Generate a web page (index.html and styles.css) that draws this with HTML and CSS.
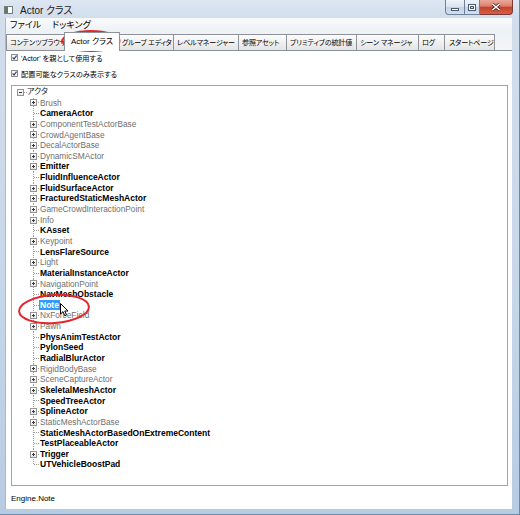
FILE: index.html
```html
<!DOCTYPE html>
<html lang="ja">
<head>
<meta charset="utf-8">
<title>Actor クラス</title>
<link rel="stylesheet" href="styles.css">
</head>
<body>
<div class="window">
  <div class="titlebar">
    <svg class="app-icon" width="9" height="8" viewBox="0 0 9 8"><rect x="0.5" y="0.5" width="8" height="7" fill="#fff" stroke="#6f7f7a"/><rect x="1" y="1" width="3" height="6" fill="#5f7a6c"/></svg>
    <span class="title">Actor クラス</span>
    <div class="caption">
      <div class="cbtn cbtn-min"><svg width="8" height="3" viewBox="0 0 8 3"><rect x="0.5" y="0.5" width="7" height="2" fill="#fff" stroke="#4b5a70"/></svg></div>
      <div class="cbtn cbtn-max"><svg width="8" height="7" viewBox="0 0 8 7"><rect x="0.5" y="0.5" width="7" height="6" fill="none" stroke="#4b5a70"/><rect x="1.5" y="1.5" width="5" height="4" fill="none" stroke="#fff"/><rect x="2.5" y="2.5" width="3" height="2" fill="none" stroke="#4b5a70"/></svg></div>
      <div class="cbtn cbtn-close"><svg width="10" height="8" viewBox="0 0 10 8"><path d="M1.5 1 L8.5 7 M8.5 1 L1.5 7" stroke="#5a1c14" stroke-width="3"/><path d="M1.5 1 L8.5 7 M8.5 1 L1.5 7" stroke="#fff" stroke-width="1.6"/></svg></div>
    </div>
  </div>
  <div class="client">
    <div class="menubar"><span class="menu-item">ファイル</span><span class="menu-item">ドッキング</span></div>
    <div class="tabs">
      <div class="tab tab-w1">コンテンツブラウザ</div>
      <div class="tab tab-w2 tab-active">Actor クラス</div>
      <div class="tab tab-w3">グループ エディタ</div>
      <div class="tab tab-w4">レベルマネージャー</div>
      <div class="tab tab-w5">参照アセット</div>
      <div class="tab tab-w6">プリミティブの統計値</div>
      <div class="tab tab-w7">シーン マネージャ</div>
      <div class="tab tab-w8">ログ</div>
      <div class="tab tab-w9">スタートページ</div>
    </div>
    <div class="panel">
      <div class="check"><svg class="cb" width="7" height="7" viewBox="0 0 7 7"><rect x="0.5" y="0.5" width="6" height="6" fill="#f3f4f6" stroke="#8e8f8f"/><path d="M1.6 3.4 L3 5 L5.6 1.6" fill="none" stroke="#36497a" stroke-width="1.2"/></svg><span>'Actor' を親として使用する</span></div>
      <div class="check check-2"><svg class="cb" width="7" height="7" viewBox="0 0 7 7"><rect x="0.5" y="0.5" width="6" height="6" fill="#f3f4f6" stroke="#8e8f8f"/><path d="M1.6 3.4 L3 5 L5.6 1.6" fill="none" stroke="#36497a" stroke-width="1.2"/></svg><span>配置可能なクラスのみ表示する</span></div>
      <div class="tree">
        <div class="row root"><span class="conn conn-root"><span class="box box-minus"></span></span><span class="label label-root">アクタ</span></div>
        <div class="row"><span class="conn"><span class="box"></span></span><span class="label gray">Brush</span></div>
        <div class="row"><span class="conn leaf"></span><span class="label bold">CameraActor</span></div>
        <div class="row"><span class="conn"><span class="box"></span></span><span class="label gray">ComponentTestActorBase</span></div>
        <div class="row"><span class="conn"><span class="box"></span></span><span class="label gray">CrowdAgentBase</span></div>
        <div class="row"><span class="conn"><span class="box"></span></span><span class="label gray">DecalActorBase</span></div>
        <div class="row"><span class="conn"><span class="box"></span></span><span class="label gray">DynamicSMActor</span></div>
        <div class="row"><span class="conn"><span class="box"></span></span><span class="label bold">Emitter</span></div>
        <div class="row"><span class="conn leaf"></span><span class="label bold">FluidInfluenceActor</span></div>
        <div class="row"><span class="conn"><span class="box"></span></span><span class="label bold">FluidSurfaceActor</span></div>
        <div class="row"><span class="conn"><span class="box"></span></span><span class="label bold">FracturedStaticMeshActor</span></div>
        <div class="row"><span class="conn"><span class="box"></span></span><span class="label gray">GameCrowdInteractionPoint</span></div>
        <div class="row"><span class="conn"><span class="box"></span></span><span class="label gray">Info</span></div>
        <div class="row"><span class="conn leaf"></span><span class="label bold">KAsset</span></div>
        <div class="row"><span class="conn"><span class="box"></span></span><span class="label gray">Keypoint</span></div>
        <div class="row"><span class="conn leaf"></span><span class="label bold">LensFlareSource</span></div>
        <div class="row"><span class="conn"><span class="box"></span></span><span class="label gray">Light</span></div>
        <div class="row"><span class="conn leaf"></span><span class="label bold">MaterialInstanceActor</span></div>
        <div class="row"><span class="conn"><span class="box"></span></span><span class="label gray">NavigationPoint</span></div>
        <div class="row"><span class="conn leaf"></span><span class="label bold">NavMeshObstacle</span></div>
        <div class="row"><span class="conn leaf"></span><span class="label bold selected">Note</span></div>
        <div class="row"><span class="conn"><span class="box"></span></span><span class="label gray">NxForceField</span></div>
        <div class="row"><span class="conn"><span class="box"></span></span><span class="label gray">Pawn</span></div>
        <div class="row"><span class="conn leaf"></span><span class="label bold">PhysAnimTestActor</span></div>
        <div class="row"><span class="conn leaf"></span><span class="label bold">PylonSeed</span></div>
        <div class="row"><span class="conn leaf"></span><span class="label bold">RadialBlurActor</span></div>
        <div class="row"><span class="conn"><span class="box"></span></span><span class="label gray">RigidBodyBase</span></div>
        <div class="row"><span class="conn"><span class="box"></span></span><span class="label gray">SceneCaptureActor</span></div>
        <div class="row"><span class="conn"><span class="box"></span></span><span class="label bold">SkeletalMeshActor</span></div>
        <div class="row"><span class="conn leaf"></span><span class="label bold">SpeedTreeActor</span></div>
        <div class="row"><span class="conn"><span class="box"></span></span><span class="label bold">SplineActor</span></div>
        <div class="row"><span class="conn"><span class="box"></span></span><span class="label gray">StaticMeshActorBase</span></div>
        <div class="row"><span class="conn leaf"></span><span class="label bold">StaticMeshActorBasedOnExtremeContent</span></div>
        <div class="row"><span class="conn leaf"></span><span class="label bold">TestPlaceableActor</span></div>
        <div class="row"><span class="conn"><span class="box"></span></span><span class="label bold">Trigger</span></div>
        <div class="row"><span class="conn leaf last"></span><span class="label bold">UTVehicleBoostPad</span></div>
      </div>
      <div class="status">Engine.Note</div>
    </div>
  </div>
  <svg class="annot" width="520" height="515" viewBox="0 0 520 515">
    <ellipse cx="91" cy="41" rx="28.5" ry="10" fill="none" stroke="#e3262b" stroke-width="2"/>
    <ellipse cx="54" cy="309" rx="35" ry="14" transform="rotate(-4 54 309)" fill="none" stroke="#e3262b" stroke-width="2"/>
  </svg>
  <svg class="cursor" width="9" height="14" viewBox="0 0 9 14"><path d="M0.5 0.5 L0.5 11 L3 8.6 L4.8 12.8 L6.5 12 L4.8 8 L8 8 Z" fill="#fff" stroke="#000" stroke-width="1" stroke-linejoin="round"/></svg>
</div>
</body>
</html>
```
FILE: styles.css
```css
* { box-sizing: border-box; margin: 0; padding: 0; }
html, body { width: 520px; height: 515px; overflow: hidden; }
body {
  font-family: "Liberation Sans", "Noto Sans CJK JP", sans-serif;
  background: #c6d5e7;
  color: #000;
}
.window {
  position: relative;
  width: 520px;
  height: 515px;
  display: flex;
  flex-direction: column;
  background: linear-gradient(to bottom, #dde7f3 0, #d2deec 18px, #c6d6e9 60%, #b7cbe3 100%);
  border-right: 1px solid #7088a8;
  border-bottom: 1px solid #7088a8;
}
.titlebar {
  height: 18px;
  display: flex;
  align-items: center;
  padding-left: 4px;
}
.app-icon { margin-top: 2px; flex: none; }
.title {
  margin-left: 7px;
  font-size: 10px;
  color: #1b1b1b;
  font-feature-settings: "palt";
  margin-top: 1px;
}
.caption {
  margin-left: auto;
  margin-right: 6px;
  align-self: flex-start;
  display: flex;
}
.cbtn {
  height: 15px;
  display: flex;
  align-items: center;
  justify-content: center;
  border: 1px solid #6f819b;
  border-top: 0;
  background: linear-gradient(to bottom, #eef3f9 0, #d9e3ef 50%, #c4d2e4 51%, #d3dfee 100%);
}
.cbtn-min { width: 19px; border-radius: 0 0 0 4px; border-right: 0; }
.cbtn-min svg { margin-top: 5px; }
.cbtn-max { width: 16px; }
.cbtn-close {
  width: 33px;
  border-left: 0;
  border-color: #7a3a33;
  border-radius: 0 0 4px 0;
  background: linear-gradient(to bottom, #e9a99b 0, #dc7f6c 45%, #c6402b 50%, #d2604a 100%);
}
.client {
  flex: 1;
  margin: 0 7px 5px 5px;
  display: flex;
  flex-direction: column;
  background: #fff;
  border-left: 1px solid #aab8c9;
}
.menubar {
  height: 14px;
  display: flex;
  align-items: center;
  padding-left: 4px;
  gap: 11px;
  background: linear-gradient(to bottom, #f9fafc, #eef1f5);
  font-size: 9px;
  font-feature-settings: "palt";
}
.menu-item { line-height: 14px; }
.tabs {
  height: 18px;
  display: flex;
  align-items: flex-end;
  background: linear-gradient(to bottom, #eef1f5, #f4f5f7);
}
.tab {
  height: 16px;
  flex: none;
  margin-right: -1px;
  padding-left: 3px;
  border: 1px solid #8d9198;
  border-bottom: 0;
  background: linear-gradient(to bottom, #fcfcfc, #e4e4e4);
  font-size: 7px;
  letter-spacing: -0.1px;
  line-height: 15px;
  white-space: nowrap;
  overflow: hidden;
  font-feature-settings: "palt";
}
.tab-active {
  height: 19px;
  margin-bottom: -1px;
  background: #fff;
  font-size: 8px;
  letter-spacing: 0;
  line-height: 17px;
  padding-left: 6px;
  z-index: 1;
}
.tab-w1 { width: 59px; }
.tab-w2 { width: 56px; }
.tab-w3 { width: 55px; padding-left: 2px; letter-spacing: -0.3px; }
.tab-w4 { width: 66px; }
.tab-w5 { width: 49px; }
.tab-w6 { width: 71px; }
.tab-w7 { width: 63px; }
.tab-w8 { width: 27px; }
.tab-w9 { width: 51px; padding-left: 4px; }
.panel {
  flex: 1;
  display: flex;
  flex-direction: column;
  border-top: 1px solid #8d9198;
  padding: 2px 4px 0 5px;
  background: #fff;
}
.check {
  height: 9px;
  display: flex;
  align-items: center;
  gap: 3px;
  font-size: 7.2px;
  font-feature-settings: "palt";
}
.check-2 { margin-top: 7px; }
.cb { flex: none; }
.tree {
  margin-top: 7px;
  height: 401px;
  border: 1px solid #a3a3a3;
  padding-top: 1px;
  display: flex;
  flex-direction: column;
}
.row {
  height: 10.65px;
  display: flex;
  align-items: center;
  padding-left: 14px;
  flex: none;
}
.row.root { padding-left: 1px; }
.conn {
  width: 14px;
  height: 100%;
  flex: none;
  display: flex;
  align-items: center;
  background-image:
    repeating-linear-gradient(to bottom, #9c9c9c 0 1px, transparent 1px 2px),
    repeating-linear-gradient(to right, #9c9c9c 0 1px, transparent 1px 2px);
  background-size: 1px 100%, 6px 1px;
  background-position: 7px 0, 8px 50%;
  background-repeat: no-repeat;
}
.conn.last { background-size: 1px 50%, 6px 1px; }
.conn-root {
  background-image: repeating-linear-gradient(to right, #9c9c9c 0 1px, transparent 1px 2px);
  background-size: 3px 1px;
  background-position: 11px 50%;
}
.box {
  width: 7px;
  height: 7px;
  margin-left: 4px;
  border: 1px solid #959595;
  background:
    linear-gradient(#3a3a3a, #3a3a3a) center / 3px 1px no-repeat,
    linear-gradient(#3a3a3a, #3a3a3a) center / 1px 3px no-repeat,
    linear-gradient(to bottom, #fff, #e6e6e6);
}
.box-minus {
  background:
    linear-gradient(#3a3a3a, #3a3a3a) center / 3px 1px no-repeat,
    linear-gradient(to bottom, #fff, #e6e6e6);
}
.label {
  padding: 0 1px;
  margin-left: -1px;
  line-height: 10.65px;
  white-space: nowrap;
}
.label-root {
  font-size: 8px;
  color: #222;
  font-feature-settings: "palt";
}
.gray { font-size: 8.3px; color: #6f6f6f; }
.bold { font-size: 8.5px; font-weight: bold; color: #000; }
.selected { background: #3399ff; color: #fff; }
.status {
  margin-top: 7px;
  font-size: 8px;
  line-height: 12px;
  padding-left: 0;
}
.annot { position: absolute; left: 0; top: 0; pointer-events: none; }
.cursor { position: absolute; left: 60px; top: 303px; pointer-events: none; }
```
